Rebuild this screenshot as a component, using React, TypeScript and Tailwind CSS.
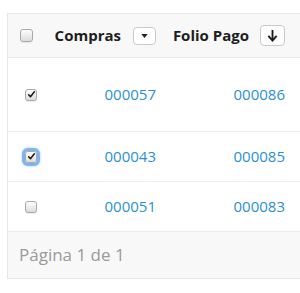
import React from 'react';

function Box({ checked, focused, size = 13 }: { checked?: boolean; focused?: boolean; size?: number }) {
  return (
    <span
      className={`relative inline-flex items-center justify-center rounded-[3px] border border-[#a9a9a9] bg-gradient-to-b from-[#fdfdfd] to-[#dcdcdc] ${
        focused ? 'shadow-[0_0_0_3px_#7fb2f0,0_0_3px_3px_#a9cdf7]' : 'shadow-[0_1px_1px_rgba(0,0,0,0.08)]'
      }`}
      style={{ width: size, height: size }}
    >
      {checked && (
        <svg viewBox="0 0 12 12" className="h-[9px] w-[9px]">
          <path d="M2.2 6.4 L4.6 9 L9.8 2.4" fill="none" stroke="#1a1a1a" strokeWidth="2" strokeLinecap="round" strokeLinejoin="round" />
        </svg>
      )}
    </span>
  );
}

const rows = [
  { compra: '000057', folio: '000086', checked: true, h: 'h-[74px]' },
  { compra: '000043', folio: '000085', checked: true, focused: true, h: 'h-[50px]' },
  { compra: '000051', folio: '000083', checked: false, h: 'h-[50px]' },
];

export default function App() {
  return (
    <div className="h-[293px] w-[300px] bg-white pt-[13px] pl-[7px] font-['Open_Sans',sans-serif]">
      <div className="border-l border-[#e6e6e6]">
        <div className="flex h-[45px] items-center border-y border-[#e8e8e8] bg-[#f8f8f8]">
          <div className="flex w-[44px] justify-start pl-[12px]">
            <Box />
          </div>
          <div className="flex w-[104px] items-center justify-end gap-[12px] text-[15px] font-bold text-[#1e1e1e]">
            <span>Compras</span>
            <span className="flex h-[18px] w-[23px] items-center justify-center rounded-[4px] border border-[#c9c9c9] bg-white">
              <svg viewBox="0 0 8 5" className="h-[4px] w-[7px]">
                <path d="M0 0 H8 L4 5 Z" fill="#222" />
              </svg>
            </span>
          </div>
          <div className="flex w-[129px] items-center justify-end gap-[11px] text-[15px] font-bold text-[#1e1e1e]">
            <span>Folio Pago</span>
            <span className="flex h-[21px] w-[25px] items-center justify-center rounded-[4px] border border-[#c9c9c9] bg-white">
              <svg viewBox="0 0 12 14" className="h-[13px] w-[11px]">
                <path d="M6 1 V12" stroke="#1a1a1a" strokeWidth="2" />
                <path d="M1.5 7.5 L6 12.5 L10.5 7.5" fill="none" stroke="#1a1a1a" strokeWidth="2" />
              </svg>
            </span>
          </div>
        </div>
        {rows.map((r) => (
          <div key={r.compra} className={`flex ${r.h} items-center border-b border-[#ececec] text-[15px] text-[#2b8fd5]`}>
            <div className="flex w-[44px] pl-[17px]">
              <Box checked={r.checked} focused={r.focused} size={12} />
            </div>
            <div className="w-[104px] text-right">{r.compra}</div>
            <div className="w-[129px] text-right">{r.folio}</div>
          </div>
        ))}
        <div className="flex h-[47px] items-center border-b border-[#e6e6e6] bg-[#f8f8f8] pl-[11px] text-[17px] text-[#9a9a9a]">
          Página 1 de 1
        </div>
      </div>
    </div>
  );
}
